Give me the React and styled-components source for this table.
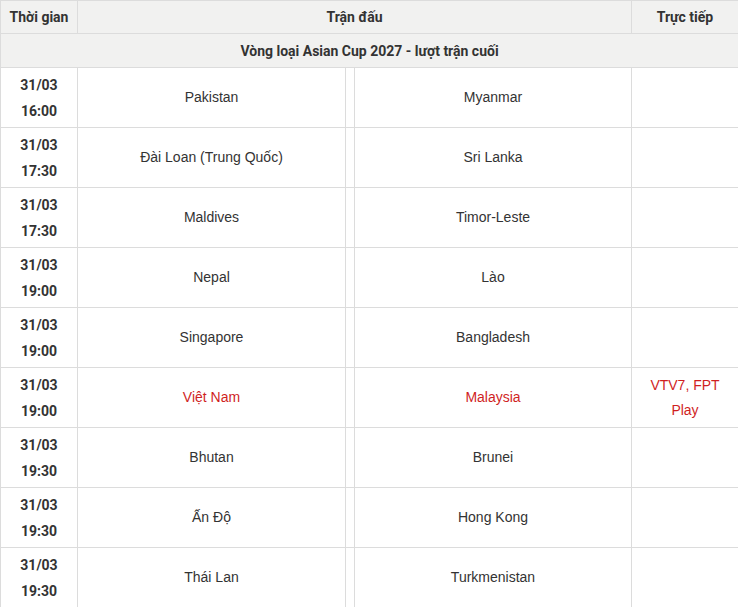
import styled, { createGlobalStyle } from 'styled-components'

const GlobalStyle = createGlobalStyle`
    body {
        margin: 0;
        background: #fff;
        font-family: Roboto, "Liberation Sans", Arial, sans-serif;
    }
`

const matches = [
    { date: '31/03', time: '16:00', home: 'Pakistan', away: 'Myanmar' },
    { date: '31/03', time: '17:30', home: 'Đài Loan (Trung Quốc)', away: 'Sri Lanka' },
    { date: '31/03', time: '17:30', home: 'Maldives', away: 'Timor-Leste' },
    { date: '31/03', time: '19:00', home: 'Nepal', away: 'Lào' },
    { date: '31/03', time: '19:00', home: 'Singapore', away: 'Bangladesh' },
    { date: '31/03', time: '19:00', home: 'Việt Nam', away: 'Malaysia', live: 'VTV7, FPT Play', hot: true },
    { date: '31/03', time: '19:30', home: 'Bhutan', away: 'Brunei' },
    { date: '31/03', time: '19:30', home: 'Ấn Độ', away: 'Hong Kong' },
    { date: '31/03', time: '19:30', home: 'Thái Lan', away: 'Turkmenistan' },
]

function App() {
    return (
        <>
            <GlobalStyle />
            <Table>
                <colgroup>
                    <col style={{ width: 77 }} />
                    <col style={{ width: 268 }} />
                    <col style={{ width: 9 }} />
                    <col style={{ width: 277 }} />
                    <col style={{ width: 107 }} />
                </colgroup>
                <thead>
                    <HeadRow $h={33}>
                        <Th>Thời gian</Th>
                        <Th colSpan={3}>Trận đấu</Th>
                        <Th>Trực tiếp</Th>
                    </HeadRow>
                </thead>
                <tbody>
                    <HeadRow $h={34}>
                        <Th colSpan={5}>Vòng loại Asian Cup 2027 - lượt trận cuối</Th>
                    </HeadRow>
                    {matches.map((m, index) => (
                        <Row key={index}>
                            <TimeCell>{m.date}<br />{m.time}</TimeCell>
                            <Td $hot={m.hot}>{m.home}</Td>
                            <Td />
                            <Td $hot={m.hot}>{m.away}</Td>
                            <LiveCell $hot={m.hot}>{m.live}</LiveCell>
                        </Row>
                    ))}
                </tbody>
            </Table>
        </>
    )
}

const Table = styled.table`
    width: 738px;
    border-collapse: collapse;
    table-layout: fixed;
    font-size: 14px;
    color: #333;
`

const HeadRow = styled.tr`
    height: ${props => props.$h}px;
`

const Th = styled.th`
    padding: 0 6px;
    background: #f1f1f0;
    border: 1px solid #dcdcdc;
    font-weight: bold;
    color: #333;
    text-align: center;
    vertical-align: middle;
    line-height: 20px;
`

const Row = styled.tr`
    height: 60px;
`

const Td = styled.td`
    padding: 2px 6px;
    border: 1px solid #dcdcdc;
    text-align: center;
    vertical-align: middle;
    font-family: "Liberation Sans", Arial, sans-serif;
    line-height: 25px;
    color: ${props => props.$hot ? '#d01f1f' : '#333'};
`

const TimeCell = styled(Td)`
    font-family: Roboto, "Liberation Sans", Arial, sans-serif;
    font-weight: bold;
    line-height: 26px;
`

const LiveCell = styled(Td)`
    padding: 2px 10px;
`

export default App
